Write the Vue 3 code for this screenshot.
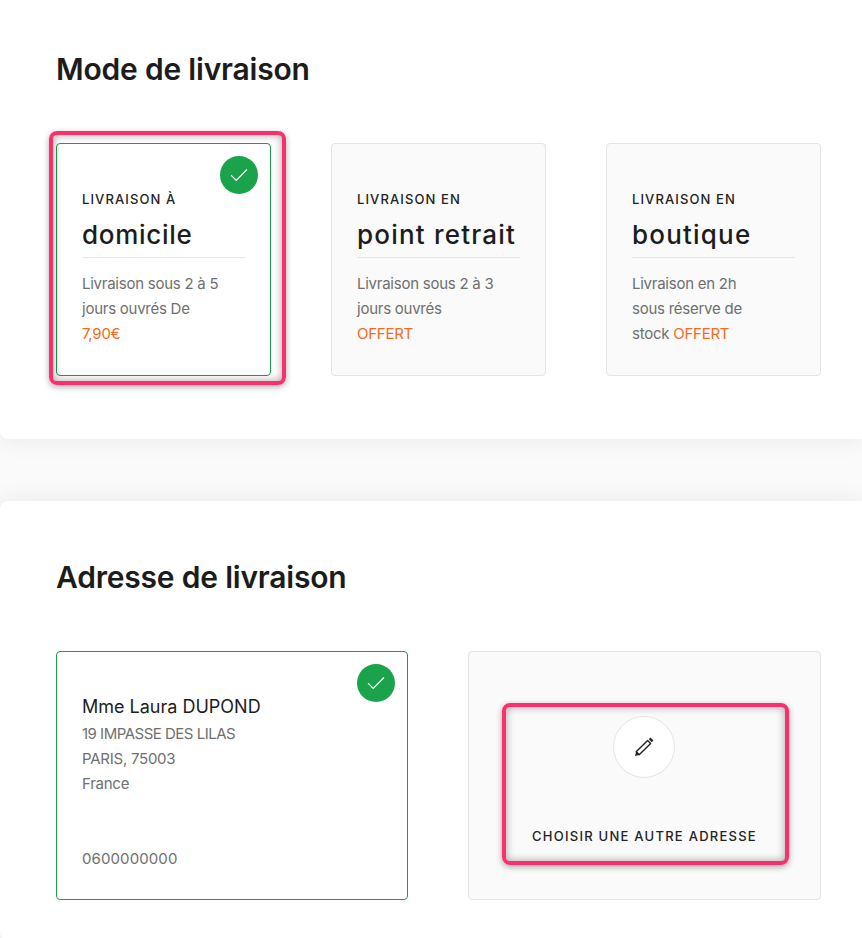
<script setup>
const modes = [
  { pre: 'LIVRAISON À', name: 'domicile', lines: ['Livraison sous 2 à 5', 'jours ouvrés De'], last: '', price: '7,90€', active: true },
  { pre: 'LIVRAISON EN', name: 'point retrait', lines: ['Livraison sous 2 à 3', 'jours ouvrés'], last: '', price: 'OFFERT', active: false },
  { pre: 'LIVRAISON EN', name: 'boutique', lines: ['Livraison en 2h', 'sous réserve de'], last: 'stock ', price: 'OFFERT', active: false },
]
</script>

<template>
  <div class="page">
    <section class="panel first">
      <h2>Mode de livraison</h2>
      <div class="modes">
        <div v-for="m in modes" :key="m.name" class="card mode" :class="{ active: m.active }">
          <span v-if="m.active" class="check">
            <svg width="18" height="14" viewBox="0 0 18 14" fill="none"><path d="M1 7.2 6.2 12.5 17 1.5" stroke="#fff" stroke-width="1.2"/></svg>
          </span>
          <span v-if="m.active" class="mark mark-mode"></span>
          <div class="pre">{{ m.pre }}</div>
          <div class="name" :class="{ tight: m.active }">{{ m.name }}</div>
          <div class="desc">
            <div v-for="l in m.lines" :key="l">{{ l }}</div>
            <div>{{ m.last }}<span class="price">{{ m.price }}</span></div>
          </div>
        </div>
      </div>
    </section>

    <section class="panel second">
      <h2>Adresse de livraison</h2>
      <div class="addresses">
        <div class="card address active">
          <span class="check">
            <svg width="18" height="14" viewBox="0 0 18 14" fill="none"><path d="M1 7.2 6.2 12.5 17 1.5" stroke="#fff" stroke-width="1.2"/></svg>
          </span>
          <div class="person">Mme Laura DUPOND</div>
          <div class="desc lines">
            <div>19 IMPASSE DES LILAS</div>
            <div>PARIS, 75003</div>
            <div>France</div>
          </div>
          <div class="desc phone">0600000000</div>
        </div>
        <div class="card other">
          <span class="mark mark-other"></span>
          <span class="pen">
            <svg width="22" height="22" viewBox="0 0 22 22" fill="none">
              <path d="M3.2 15.8 14.6 4.4 17.6 7.4 6.2 18.8Z" stroke="#222" stroke-width="1.4" stroke-linejoin="round"/>
              <path d="M2 20 3.3 15.2 6.8 18.7Z" fill="#222"/>
              <path d="M15.8 3.2 17.4 1.6 20.4 4.6 18.8 6.2Z" fill="#222"/>
            </svg>
          </span>
          <div class="choose">CHOISIR UNE AUTRE ADRESSE</div>
        </div>
      </div>
    </section>
  </div>
</template>

<style>
html, body { margin: 0; background: #fafafa; }
</style>

<style scoped>
.page {
  width: 862px;
  height: 938px;
  overflow: hidden;
  font-family: Inter, "Liberation Sans", sans-serif;
  color: #1a1a1a;
  background: #fafafa;
}
.panel {
  background: #fff;
  border-radius: 8px 0 0 8px;
  box-shadow: 0 0 24px rgba(0, 0, 0, 0.08);
  padding-left: 56px;
  padding-right: 41px;
}
.first {
  margin-top: -7px;
  padding-top: 56px;
  padding-bottom: 63px;
}
.second {
  margin-top: 62px;
  padding-top: 56px;
  padding-bottom: 40px;
}
h2 {
  margin: 0;
  font-size: 30px;
  line-height: 40px;
  font-weight: 600;
  letter-spacing: -0.2px;
  color: #1c1c1c;
}
.modes {
  margin-top: 54px;
  display: grid;
  grid-template-columns: repeat(3, 215px);
  column-gap: 60px;
}
.addresses {
  margin-top: 54px;
  display: grid;
  grid-template-columns: 352px 353px;
  column-gap: 60px;
}
.card {
  box-sizing: border-box;
  position: relative;
  background: #fafafa;
  border: 1px solid #e4e4e4;
  border-radius: 4px;
}
.card.active {
  background: #fff;
  border-color: #1a9e4b;
}
.mode {
  height: 233px;
  padding: 46px 25px 0;
}
.pre {
  font-size: 13px;
  line-height: 18px;
  font-weight: 500;
  letter-spacing: 1.1px;
  color: #222;
}
.name {
  margin-top: 10px;
  padding-bottom: 6px;
  font-size: 26px;
  line-height: 33px;
  font-weight: 500;
  letter-spacing: 1.2px;
  color: #1c1c1c;
  border-bottom: 1px solid #e6e6e6;
}
.name.tight {
  letter-spacing: 0.7px;
}
.desc {
  font-size: 15px;
  line-height: 25px;
  color: #6f6f6f;
  letter-spacing: -0.25px;
}
.mode .desc {
  margin-top: 13px;
}
.price {
  color: #f26a21;
}
.check {
  position: absolute;
  top: 12px;
  right: 12px;
  width: 38px;
  height: 38px;
  border-radius: 50%;
  background: #1aa34a;
  display: flex;
  align-items: center;
  justify-content: center;
}
.mark {
  position: absolute;
  box-sizing: border-box;
  border: 4px solid #fb2f6c;
  border-radius: 8px;
  box-shadow: 0 2px 6px rgba(0, 0, 0, 0.32), inset 0 0 8px rgba(0, 0, 0, 0.35);
  pointer-events: none;
}
.mark-mode {
  left: -8px;
  top: -13px;
  width: 237px;
  height: 254px;
}
.mark-other {
  left: 33px;
  top: 51px;
  width: 287px;
  height: 162px;
}
.address {
  height: 249px;
  padding: 43px 25px 0;
}
.person {
  font-size: 18px;
  line-height: 24px;
  color: #1c1c1c;
  letter-spacing: 0;
}
.address .lines {
  margin-top: 2px;
}
.lines div:first-child {
  letter-spacing: -0.5px;
}
.address .phone {
  margin-top: 50px;
  letter-spacing: 0.1px;
}
.other {
  height: 249px;
  display: flex;
  flex-direction: column;
  align-items: center;
  padding-top: 64px;
}
.pen {
  box-sizing: border-box;
  width: 62px;
  height: 62px;
  margin-left: -2px;
  border-radius: 50%;
  background: #fff;
  border: 1px solid #e4e4e4;
  display: flex;
  align-items: center;
  justify-content: center;
}
.choose {
  margin-top: 49px;
  font-size: 13px;
  line-height: 18px;
  font-weight: 500;
  letter-spacing: 1.25px;
  color: #222;
}
</style>
